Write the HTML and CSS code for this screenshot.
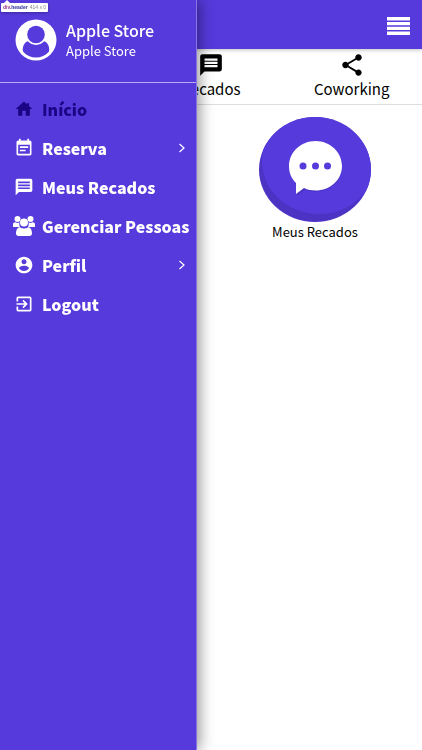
FILE: index.html
```html
<!DOCTYPE html>
<html lang="pt-BR">
<head>
<meta charset="utf-8">
<meta name="viewport" content="width=device-width, initial-scale=1">
<title>Início</title>
<link rel="stylesheet" href="styles.css">
</head>
<body>
<header class="topbar">
  <button class="burger" type="button" aria-label="Menu">
    <svg width="24" height="20" viewBox="0 0 24 20" fill="currentColor"><path d="M1 1h23v3.600H1zM1 6h23v3.300H1zM1 10.800h23v3.200H1zM1 15.500h23v3.500H1z"/></svg>
  </button>
</header>
<nav class="tabs">
  <a class="tab tab-messages" href="#recados">
    <svg width="26" height="26" viewBox="0 0 24 24" fill="currentColor"><path d="M20 2H4c-1.100 0-1.990.9-1.990 2L2 22l4-4h14c1.100 0 2-.9 2-2V4c0-1.100-.9-2-2-2zM6 6h12v2H6zm0 3h12v2H6zm0 3h12v2H6z"/></svg>
    <span>Recados</span>
  </a>
  <a class="tab" href="#coworking">
    <svg width="26" height="26" viewBox="0 0 24 24" fill="currentColor"><path d="M18 16.080c-.76 0-1.440.3-1.960.77L8.910 12.700c.05-.23.09-.46.09-.7s-.04-.47-.09-.7l7.050-4.110c.54.5 1.250.81 2.040.81 1.660 0 3-1.340 3-3s-1.340-3-3-3-3 1.340-3 3c0 .24.04.47.09.7L8.040 9.810C7.500 9.310 6.790 9 6 9c-1.660 0-3 1.340-3 3s1.340 3 3 3c.79 0 1.500-.31 2.040-.81l7.120 4.160c-.05.21-.08.43-.08.65 0 1.610 1.310 2.920 2.920 2.920s2.920-1.310 2.920-2.920-1.310-2.920-2.920-2.920z"/></svg>
    <span>Coworking</span>
  </a>
</nav>
<main class="tiles">
  <a class="tile" href="#meus-recados">
    <svg width="112" height="105" viewBox="0 0 112 105">
      <defs><clipPath id="disc"><ellipse cx="56" cy="52.500" rx="56" ry="52.500"/></clipPath></defs>
      <ellipse cx="56" cy="52.500" rx="56" ry="52.500" fill="#4c33c4"/>
      <ellipse cx="60" cy="44" rx="57" ry="53" fill="#563adc" clip-path="url(#disc)"/>
      <path d="M56.500 25.500C42 25.500 31 36 31 50c0 8 2.500 13.500 7 17.500V79l8-6.500c3.500 1.500 7 2 10.500 2C71.500 74.500 83 64 83 50S71.500 25.500 56.500 25.500z" fill="#3d28a4" opacity=".5"/>
      <path d="M56.500 24C42 24 30 35 30 49c0 8 3 13 7 17v11l8-6c3.500 1.800 7.500 2.500 11.500 2.500C71 73.500 83 63 83 49S71 24 56.500 24z" fill="#fff"/>
      <g fill="#563adc"><circle cx="44" cy="49" r="3.500"/><circle cx="56.500" cy="49" r="3.500"/><circle cx="68.500" cy="49" r="3.500"/></g>
    </svg>
    <span>Meus Recados</span>
  </a>
</main>

<aside class="drawer">
  <div class="profile">
    <svg width="42" height="42" viewBox="0 0 42 42">
      <circle cx="21" cy="21" r="20.500" fill="#fff"/>
      <path d="M8 32.500c-1-5 1.500-9.500 5.500-10.500 4.500 4.300 10.500 4.300 15 0 4 1 6.500 5.500 5.500 10.500C30.500 36.500 26 38.500 21 38.500S11.500 36.500 8 32.500z" fill="#563adc"/>
      <circle cx="21" cy="15.500" r="10.500" fill="#fff"/>
      <circle cx="21" cy="15.500" r="8.800" fill="#563adc"/>
    </svg>
    <div class="who">
      <span class="name">Apple Store</span>
      <span class="company">Apple Store</span>
    </div>
  </div>
  <nav class="menu">
    <a class="item active" href="#inicio">
      <svg class="icon" viewBox="0 0 24 24"><path d="M10 20v-6h4v6h5v-8h3L18 8.400V5h-2.500v1.200L12 3 2 12h3v8z"/></svg>
      <span>Início</span>
    </a>
    <a class="item" href="#reserva">
      <svg class="icon" viewBox="0 0 24 24"><path d="M17 10H7v2h10v-2zm2-7h-1V1h-2v2H8V1H6v2H5c-1.110 0-1.990.9-1.990 2L3 19c0 1.100.89 2 2 2h14c1.100 0 2-.9 2-2V5c0-1.100-.9-2-2-2zm0 16H5V8h14v11zm-5-5H7v2h7v-2z"/></svg>
      <span>Reserva</span>
      <svg class="chevron" viewBox="0 0 8 10"><path d="M1.500 1l4.500 4-4.500 4"/></svg>
    </a>
    <a class="item" href="#meus-recados">
      <svg class="icon" viewBox="0 0 24 24"><path d="M20 2H4c-1.100 0-1.990.9-1.990 2L2 22l4-4h14c1.100 0 2-.9 2-2V4c0-1.100-.9-2-2-2zM5 5.500h14v2H5zm0 3.500h14v2H5zm0 3.500h14v2H5z"/></svg>
      <span>Meus Recados</span>
    </a>
    <a class="item" href="#pessoas">
      <svg class="icon wide" viewBox="0 0 22 22"><circle cx="4.500" cy="4" r="3"/><circle cx="17.500" cy="4" r="3"/><path d="M0 12V9.500C0 8 1 7.300 2.300 7.300c1.500.8 3 .9 4.200.2C6 9.500 6.500 11 7 12zM22 12V9.500c0-1.500-1-2.200-2.300-2.200-1.500.8-3 .9-4.200.2.500 2 0 3.500-.5 4.500z"/><circle cx="11" cy="7.500" r="4"/><path d="M3 18.500C3 15 4.500 12.300 7 12.300c2.500 1.700 5.500 1.700 8 0 2.500 0 4 2.700 4 6.200 0 1.500-1 2.500-2.500 2.500h-11C4 21 3 20 3 18.500z"/></svg>
      <span>Gerenciar Pessoas</span>
    </a>
    <a class="item" href="#perfil">
      <svg class="icon" viewBox="0 0 24 24"><path d="M12 2C6.480 2 2 6.480 2 12s4.480 10 10 10 10-4.480 10-10S17.520 2 12 2zm0 3c1.660 0 3 1.340 3 3s-1.340 3-3 3-3-1.340-3-3 1.340-3 3-3zm0 14.200c-2.500 0-4.710-1.280-6-3.220.03-1.990 4-3.080 6-3.080 1.990 0 5.970 1.090 6 3.080-1.290 1.940-3.500 3.220-6 3.220z"/></svg>
      <span>Perfil</span>
      <svg class="chevron" viewBox="0 0 8 10"><path d="M1.500 1l4.500 4-4.500 4"/></svg>
    </a>
    <a class="item" href="#logout">
      <svg class="icon" viewBox="0 0 24 24"><path d="M10.090 15.590L11.500 17l5-5-5-5-1.410 1.410L12.670 11H3v2h9.670l-2.580 2.590zM19 3H5c-1.110 0-2 .9-2 2v4h2V5h14v14H5v-4H3v4c0 1.100.89 2 2 2h14c1.100 0 2-.9 2-2V5c0-1.100-.9-2-2-2z"/></svg>
      <span>Logout</span>
    </a>
  </nav>
</aside>
<div class="inspector"><b><i>div</i>.header</b><span>414 x 0</span></div>
</body>
</html>
```

FILE: styles.css
```css
* { box-sizing: border-box; }

body {
  margin: 0;
  min-height: 100vh;
  background: #fff;
  color: #000;
  font-family: "Noto Sans CJK SC", "Noto Sans", sans-serif;
}

a { color: inherit; text-decoration: none; }
svg { display: block; flex: none; }

.topbar {
  display: flex;
  align-items: center;
  justify-content: flex-end;
  height: 49px;
  padding: 3px 12px 0;
  background: #563adc;
  box-shadow: 0 1px 4px rgba(0, 0, 0, .25);
}

.burger {
  padding: 0;
  border: 0;
  background: none;
  color: #fff;
}

.tabs {
  display: grid;
  grid-template-columns: repeat(3, 1fr);
  height: 56px;
  padding-top: 3px;
  border-bottom: 1px solid #ddd;
}

.tab {
  display: flex;
  flex-direction: column;
  align-items: center;
  font-size: 15px;
  line-height: 22px;
}

.tab-messages { grid-column: 2; }

.tiles {
  display: grid;
  grid-template-columns: 1fr 1fr;
  padding: 12px 2px 0 0;
}

.tile {
  grid-column: 2;
  display: flex;
  flex-direction: column;
  align-items: center;
  font-size: 13px;
  line-height: 20px;
}

.drawer {
  position: fixed;
  top: 0;
  bottom: 0;
  left: 0;
  width: 197px;
  background: #563adc;
  border-right: 1px solid #8673e4;
  color: #fff;
  box-shadow: 2px 0 14px rgba(0, 0, 0, .45);
}

.profile {
  display: flex;
  gap: 9px;
  height: 83px;
  padding: 19px 15px 0;
  border-bottom: 1px solid #b9adf0;
}

.who {
  display: flex;
  flex-direction: column;
}

.name { font-size: 16px; font-weight: 500; line-height: 22px; }
.company { font-size: 13px; line-height: 20px; }

.menu { padding-top: 6px; }

.item {
  display: flex;
  align-items: center;
  height: 39px;
  padding: 0 10px 0 14px;
  font-size: 16px;
  font-weight: 900;
  line-height: 24px;
  white-space: nowrap;
}

.item.active { color: #1c0585; }

.icon {
  width: 20px;
  height: 20px;
  margin-right: 8px;
  fill: currentColor;
}

.icon.wide {
  width: 22px;
  height: 22px;
  margin: 0 7px 0 -1px;
}

.chevron {
  width: 8px;
  height: 10px;
  margin-left: auto;
  fill: none;
  stroke: currentColor;
  stroke-width: 1.2;
}

.inspector {
  position: fixed;
  top: 3px;
  left: 1px;
  display: flex;
  gap: 2px;
  padding: 0 2px;
  background: #fff;
  border-radius: 1px;
  box-shadow: 0 1px 3px rgba(0, 0, 0, .3);
  color: #888;
  font-family: "Liberation Sans", sans-serif;
  font-size: 5px;
  line-height: 9px;
  white-space: nowrap;
}

.inspector::before {
  content: "";
  position: absolute;
  top: -3px;
  left: 3px;
  border: 3px solid transparent;
  border-top: 0;
  border-bottom-color: #fff;
}

.inspector b { color: #2b2b9c; }
.inspector i { color: #a0338f; font-style: normal; }
```
